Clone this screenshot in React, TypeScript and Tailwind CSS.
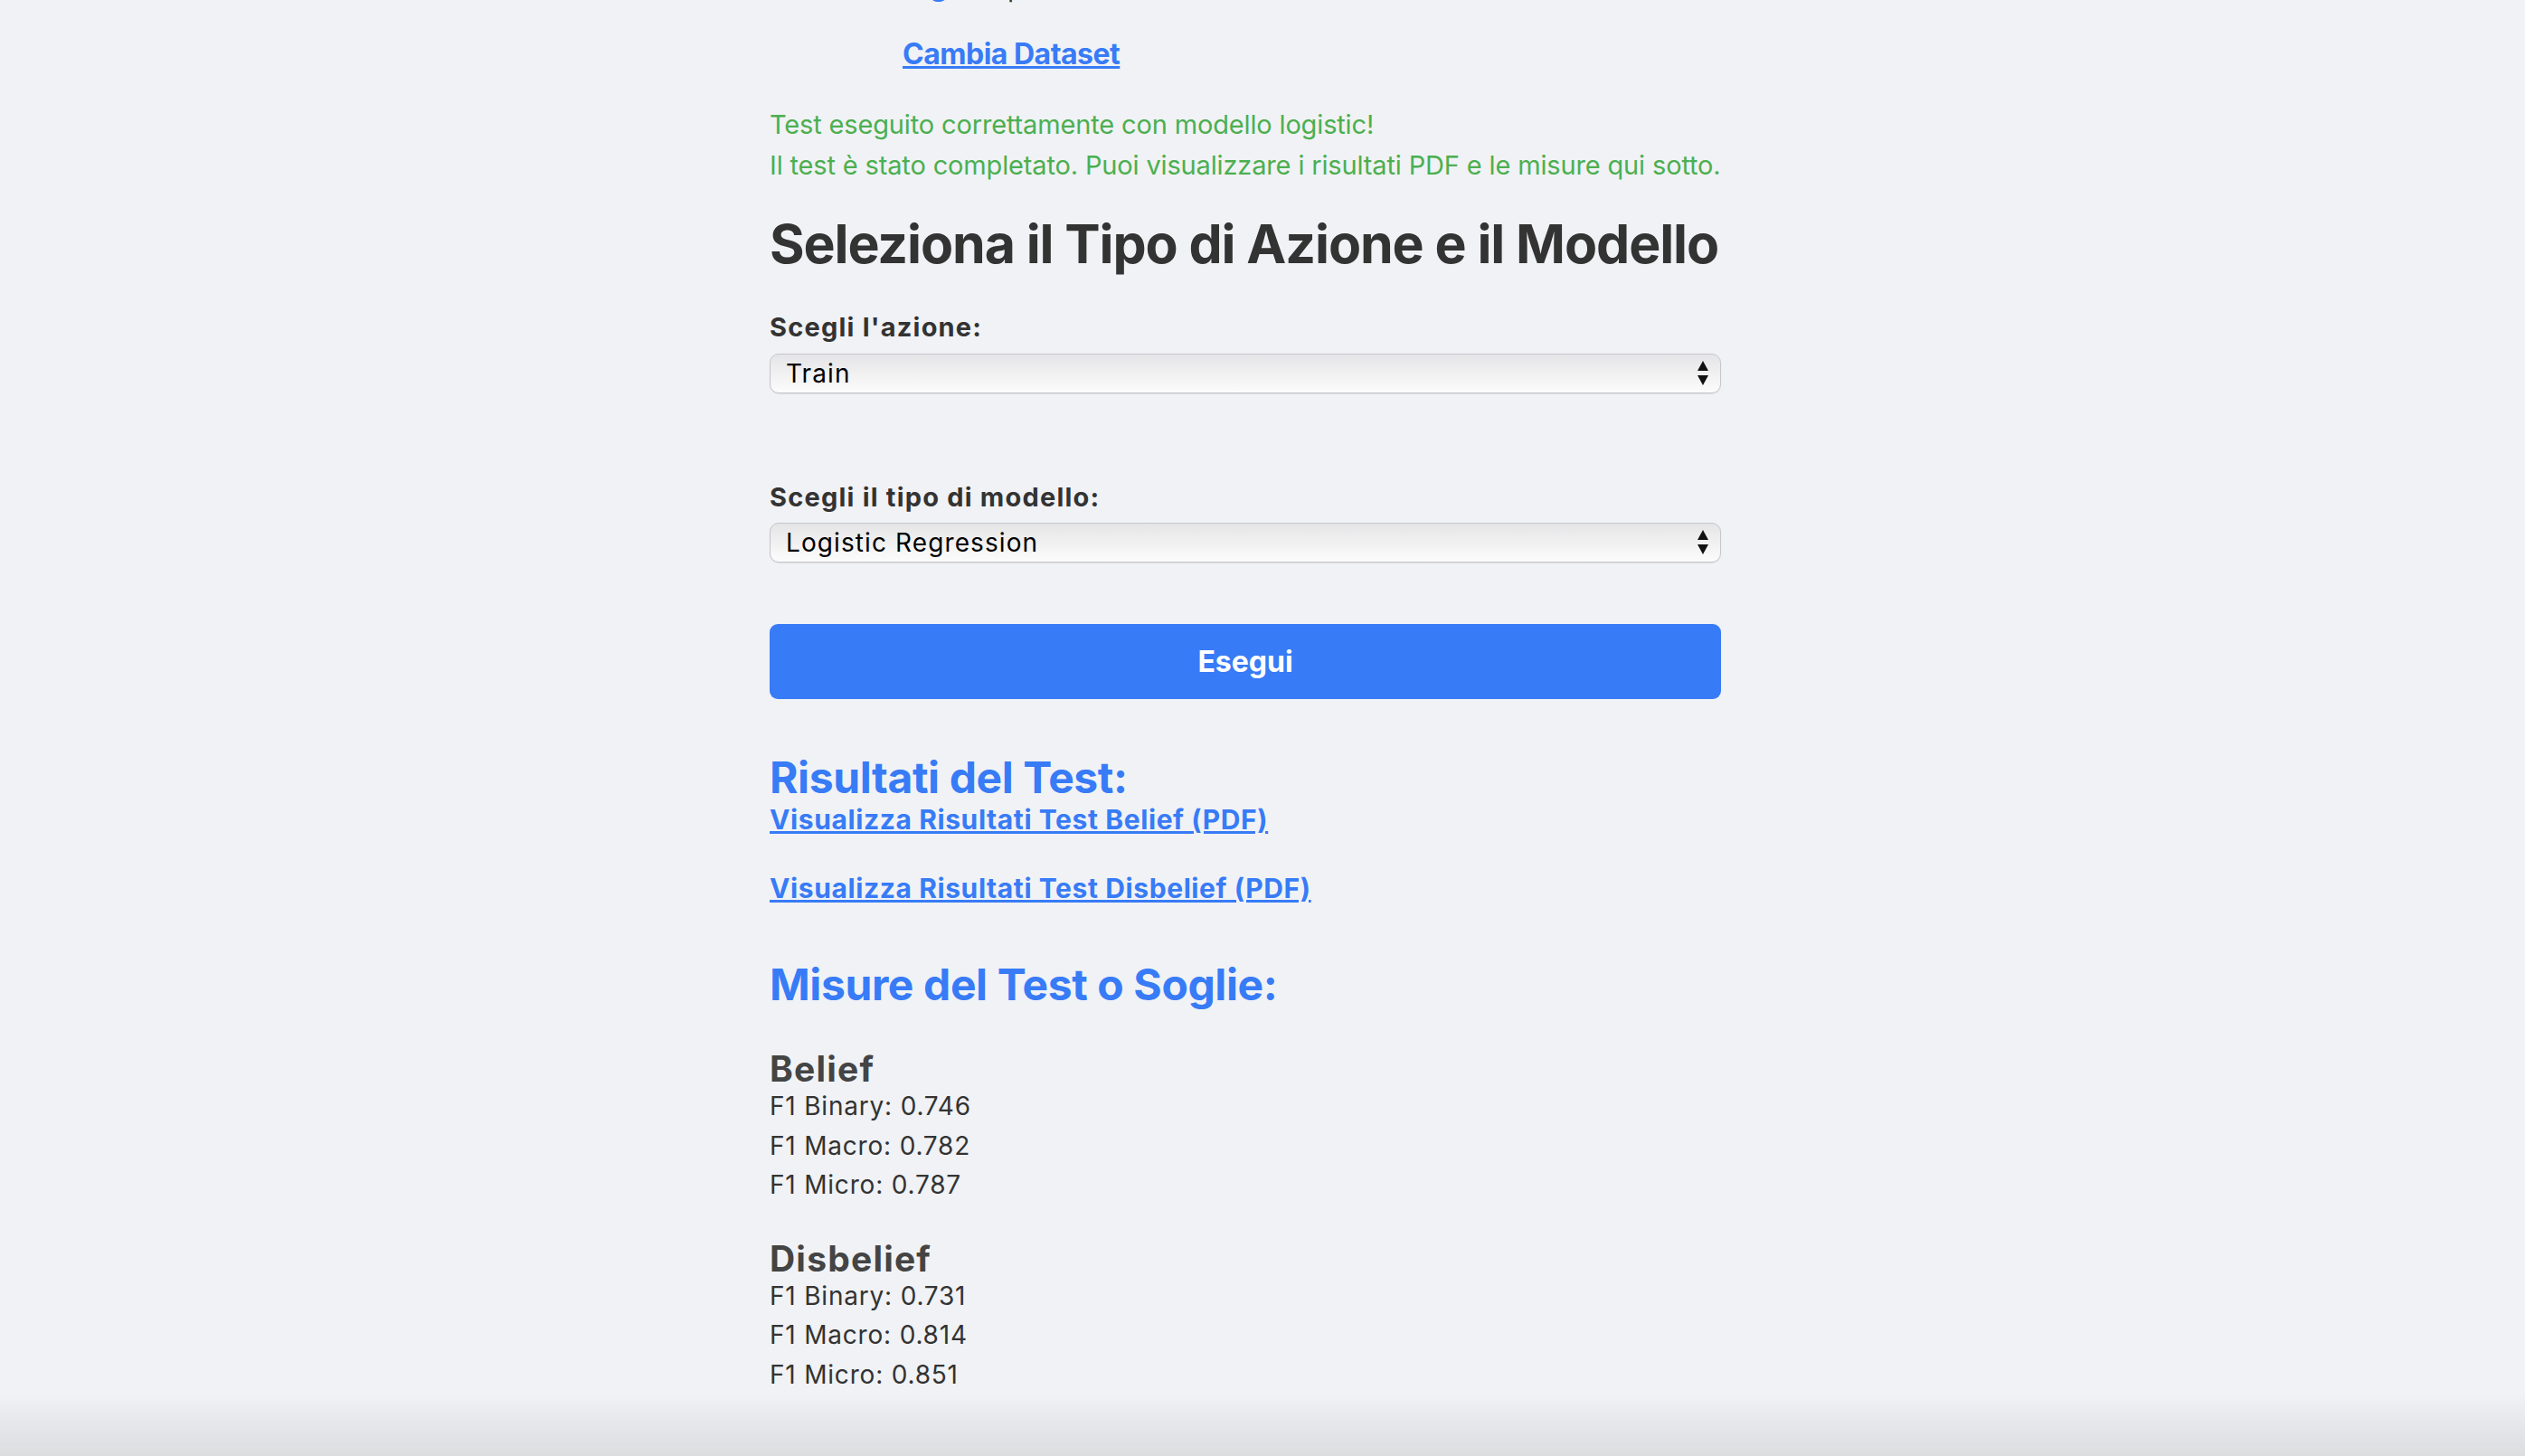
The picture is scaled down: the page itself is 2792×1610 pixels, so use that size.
import React from 'react';

const font = { fontFamily: 'Inter, "Noto Sans", sans-serif' };

const Arrows = () => (
    <svg className="pointer-events-none absolute right-[13px] top-1/2 -translate-y-1/2" width="14" height="30" viewBox="0 0 14 30">
        <path d="M7 1 L13 12 L1 12 Z" fill="#111" />
        <path d="M1 17 L13 17 L7 28 Z" fill="#111" />
    </svg>
);

const NativeSelect = ({ value, options }: { value: string; options: string[] }) => (
    <div className="relative w-full">
        <select
            defaultValue={value}
            className="appearance-none w-full h-[44px] pl-[17px] pr-[40px] rounded-[10px] border border-[#c6c6c9] bg-gradient-to-b from-[#e5e5e7] to-[#fcfcfc] text-[28px] leading-[40px] tracking-[1.1px] text-black outline-none shadow-[0_1px_1px_rgba(0,0,0,0.08)]"
        >
            {options.map((o) => (
                <option key={o}>{o}</option>
            ))}
        </select>
        <Arrows />
    </div>
);

const Metric = ({ title, rows }: { title: string; rows: [string, string][] }) => (
    <div>
        <h3 className="text-[39px] leading-[40px] tracking-[1.2px] font-bold text-[#444]">{title}</h3>
        {rows.map(([k, v]) => (
            <p key={k} className="text-[28px] leading-[43.5px] tracking-[0.8px] text-[#333]">
                {k}: {v}
            </p>
        ))}
    </div>
);

export default function App() {
    return (
        <div className="flow-root min-h-screen bg-[#f0f2f5] overflow-hidden" style={font}>
            <div className="flow-root ml-[851px] w-[1052px] pb-[60px]">
                {/* nav row, scrolled mostly out of view */}
                <div className="flex items-baseline mt-[-36px] ml-[69px] h-[40px] text-[32px] leading-[40px] font-bold">
                    <a href="#" className="text-[#387bf6]">Training</a>
                    <span className="ml-[64px] text-[#333] font-normal">|</span>
                    <a href="#" className="ml-[24px] text-[#387bf6]">Home</a>
                </div>

                <a href="#" className="block ml-[147px] mt-[36px] w-fit text-[32px] leading-[40px] tracking-[-0.5px] font-bold text-[#387bf6] underline">
                    Cambia Dataset
                </a>

                <div className="mt-[35px] text-[29px] leading-[45px] tracking-[-0.15px] text-[#4caf50] whitespace-nowrap">
                    <p>Test eseguito correttamente con modello logistic!</p>
                    <p>Il test è stato completato. Puoi visualizzare i risultati PDF e le misure qui sotto.</p>
                </div>

                <h1 className="mt-[30px] text-[59px] leading-[70px] tracking-[-1.1px] font-bold text-[#333] whitespace-nowrap">
                    Seleziona il Tipo di Azione e il Modello
                </h1>

                <label className="block mt-[40px] text-[29px] leading-[34px] tracking-[1.2px] font-bold text-[#333]">Scegli l'azione:</label>
                <div className="mt-[12px]">
                    <NativeSelect value="Train" options={['Train', 'Test']} />
                </div>

                <label className="block mt-[98px] text-[29px] leading-[34px] tracking-[1.2px] font-bold text-[#333]">Scegli il tipo di modello:</label>
                <div className="mt-[11px]">
                    <NativeSelect value="Logistic Regression" options={['Logistic Regression', 'SVM', 'Random Forest']} />
                </div>

                <button className="mt-[68px] w-full h-[83px] rounded-[9px] bg-[#387bf6] text-white text-[32px] font-bold">
                    Esegui
                </button>

                <h2 className="mt-[60px] text-[48px] leading-[54px] tracking-[-0.4px] font-bold text-[#387bf6]">Risultati del Test:</h2>
                <a href="#" className="block w-fit text-[30px] leading-[38px] tracking-[0.6px] font-bold text-[#387bf6] underline">
                    Visualizza Risultati Test Belief (PDF)
                </a>
                <a href="#" className="block w-fit mt-[38px] text-[30px] leading-[38px] tracking-[0.6px] font-bold text-[#387bf6] underline">
                    Visualizza Risultati Test Disbelief (PDF)
                </a>

                <h2 className="mt-[60px] text-[48px] leading-[56px] tracking-[-0.4px] font-bold text-[#387bf6]">Misure del Test o Soglie:</h2>

                <div className="mt-[45px]">
                    <Metric title="Belief" rows={[['F1 Binary', '0.746'], ['F1 Macro', '0.782'], ['F1 Micro', '0.787']]} />
                </div>
                <div className="mt-[39px]">
                    <Metric title="Disbelief" rows={[['F1 Binary', '0.731'], ['F1 Macro', '0.814'], ['F1 Micro', '0.851']]} />
                </div>
            </div>
            <div className="pointer-events-none fixed inset-x-0 bottom-0 h-[70px] bg-gradient-to-b from-transparent to-[rgba(0,0,0,0.085)]" />
        </div>
    );
}
